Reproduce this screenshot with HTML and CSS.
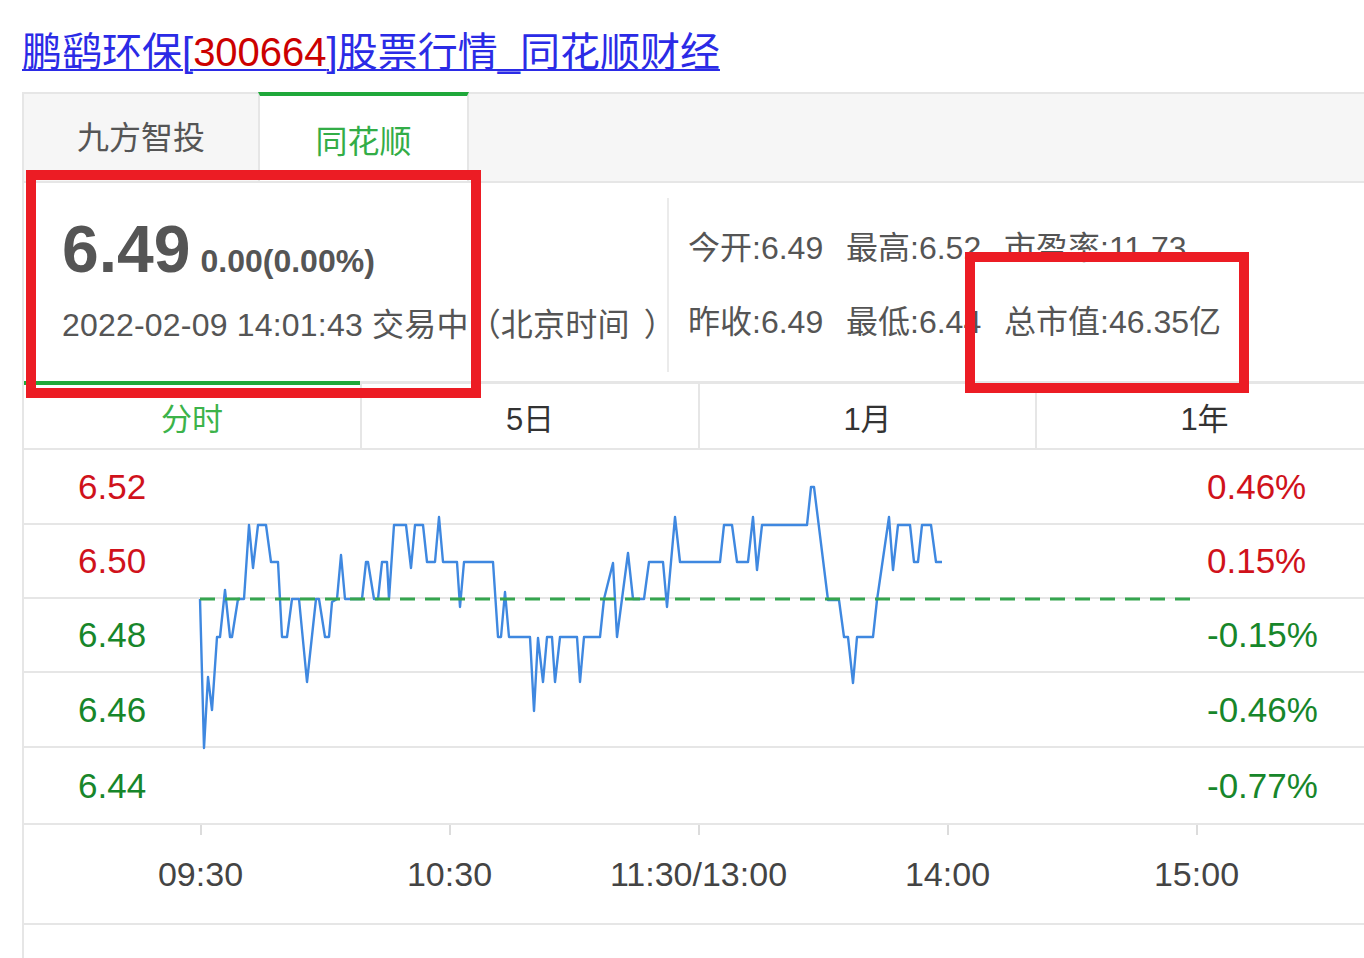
FILE: index.html
```html
<!DOCTYPE html>
<html lang="zh-CN">
<head>
<meta charset="utf-8">
<title>鹏鹞环保[300664]股票行情_同花顺财经</title>
<link rel="stylesheet" href="styles.css">
</head>
<body>
<div class="page">
  <h3 class="title"><a class="link" href="#">鹏鹞环保[<span class="code">300664</span>]股票行情_同花顺财经</a></h3>
  <div class="card">
    <div class="tabs">
      <div class="tab">九方智投</div>
      <div class="tab active">同花顺</div>
    </div>
    <div class="info">
      <div class="quote">
        <div class="price-row"><span class="price">6.49</span><span class="change">0.00(0.00%)</span></div>
        <div class="time">2022-02-09 14:01:43 交易中<span class="paren-l">（</span>北京时间<span class="paren-r">）</span></div>
      </div>
      <div class="stats">
        <span>今开:6.49</span><span>最高:6.52</span><span>市盈率:11.73</span>
        <span>昨收:6.49</span><span>最低:6.44</span><span>总市值:46.35亿</span>
      </div>
    </div>
    <div class="periods">
      <div class="period active">分时</div>
      <div class="period">5日</div>
      <div class="period">1月</div>
      <div class="period">1年</div>
    </div>
    <div class="chart">
      <div class="row r1"><span class="yl up">6.52</span><span class="yr up">0.46%</span></div>
      <div class="row r2"><span class="yl up">6.50</span><span class="yr up">0.15%</span></div>
      <div class="row r3"><span class="yl down">6.48</span><span class="yr down">-0.15%</span></div>
      <div class="row r4"><span class="yl down">6.46</span><span class="yr down">-0.46%</span></div>
      <div class="row r5"><span class="yl down">6.44</span><span class="yr down">-0.77%</span></div>
      <svg class="plot" width="1348" height="375" viewBox="24 450 1348 375">
        <polyline class="price-line" points="200,599 204,748 208,677 212,710 217,637 220,637 225,590 230,637 232,637 238,599 244,599 249,525 253,568 258,525 266,525 271,562 278,562 282,637 287,637 292,599 299,599 307,682 316,599 319,599 325,637 329,637 332,602 337,599 341,555 345,599 362,599 366,562 368,562 374,599 378,599 382,562 387,562 389,599 394,525 406,525 411,568 415,525 423,525 427,562 435,562 439,517 443,562 457,562 460,607 464,562 493,562 498,637 501,637 505,592 509,637 530,637 534,711 538,638 543,682 547,637 552,637 555,682 560,637 577,637 580,682 584,637 600,637 604,599 613,563 617,637 628,553 633,599 644,599 649,562 663,562 667,607 675,517 680,562 720,562 724,525 732,525 737,562 748,562 753,517 757,570 762,525 807,525 811,487 814,487 828,600 839,600 844,637 848,637 853,683 857,637 873,637 877,600 889,517 893,570 898,525 910,525 914,562 918,562 922,525 931,525 936,562 942,562"/>
        <line class="base-line" x1="200" y1="599" x2="1190" y2="599"/>
      </svg>
    </div>
    <div class="axis">
      <div class="tick">09:30</div>
      <div class="tick">10:30</div>
      <div class="tick">11:30/13:00</div>
      <div class="tick">14:00</div>
      <div class="tick">15:00</div>
    </div>
    <div class="tail"></div>
  </div>
  <div class="hl hl-1"></div>
  <div class="hl hl-2"></div>
</div>
</body>
</html>
```
FILE: styles.css
```css
html, body {
  margin: 0;
  padding: 0;
  background: #fff;
}
body {
  width: 1364px;
  height: 958px;
  overflow: hidden;
  font-family: "Liberation Sans", "Noto Sans CJK SC", sans-serif;
}
.page {
  position: relative;
  padding-top: 28px;
}
.title {
  margin: 0 0 16px 22px;
  font-weight: normal;
  font-size: 40px;
  line-height: 48px;
  white-space: nowrap;
}
.link {
  color: #2b2be6;
  text-decoration: underline;
  text-decoration-thickness: 2px;
  text-underline-offset: 3px;
}
.code {
  color: #cc0000;
}
.card {
  margin-left: 22px;
  width: 1350px;
  border-top: 2px solid #e6e6e6;
  border-left: 2px solid #e6e6e6;
}
.tabs {
  display: flex;
  height: 89px;
  box-sizing: border-box;
  background: #f6f6f6;
  border-bottom: 2px solid #e6e6e6;
}
.tab {
  width: 234px;
  box-sizing: border-box;
  padding-bottom: 6px;
  display: flex;
  align-items: center;
  justify-content: center;
  font-size: 32px;
  color: #555;
}
.tab.active {
  width: 211px;
  margin-top: -2px;
  padding-bottom: 0;
  background: #fff;
  border-top: 4px solid #1fa83a;
  border-left: 2px solid #e6e6e6;
  border-right: 2px solid #e6e6e6;
  color: #33ad47;
}
.info {
  display: flex;
  height: 198px;
}
.quote {
  width: 643px;
  box-sizing: border-box;
  padding: 33px 0 0 38px;
  color: #555;
}
.price-row {
  font-size: 66px;
  line-height: 66px;
  font-weight: bold;
  white-space: nowrap;
}
.change {
  font-size: 32px;
  line-height: 32px;
  margin-left: 10px;
}
.time {
  margin-top: 20px;
  font-size: 32px;
  line-height: 40px;
  white-space: nowrap;
  letter-spacing: 0.2px;
}
.paren-l,
.paren-r {
  display: inline-block;
  font-family: "Noto Sans CJK SC", sans-serif;
}
.paren-r {
  margin-left: 14px;
}
.stats {
  margin-top: 15px;
  height: 174px;
  box-sizing: border-box;
  border-left: 2px solid #ebebeb;
  padding: 30px 0 0 19px;
  display: grid;
  grid-template-columns: 158px 158px auto;
  grid-auto-rows: 40px;
  row-gap: 34px;
  font-size: 32px;
  line-height: 40px;
  color: #555;
  white-space: nowrap;
}
.periods {
  display: flex;
}
.period {
  flex: none;
  width: 337px;
  height: 69px;
  box-sizing: border-box;
  padding-top: 1px;
  border-top: 3px solid #e6e6e6;
  border-bottom: 2px solid #e6e6e6;
  border-left: 2px solid #e6e6e6;
  display: flex;
  align-items: center;
  justify-content: center;
  font-size: 31px;
  color: #333;
}
.period.active {
  width: 336px;
  border-left: none;
  border-top: 4px solid #22a83a;
  padding-top: 0;
  color: #3cb34a;
}
.period:nth-child(2) {
  width: 338px;
}
.chart {
  position: relative;
}
.row {
  display: flex;
  align-items: center;
  box-sizing: border-box;
  padding-left: 54px;
  border-bottom: 2px solid #e6e6e6;
  font-size: 35px;
  line-height: 40px;
}
.r1 { height: 75px; }
.r2 { height: 74px; }
.r3 { height: 74px; }
.r4 { height: 75px; }
.r5 { height: 77px; }
.yl {
  width: 1129px;
}
.up {
  color: #d0121b;
}
.down {
  color: #17862a;
}
.plot {
  position: absolute;
  left: 0;
  top: 0;
  overflow: visible;
}
.price-line {
  fill: none;
  stroke: #3f88e0;
  stroke-width: 2.4;
  stroke-linejoin: round;
}
.base-line {
  stroke: #35a54f;
  stroke-width: 3;
  stroke-dasharray: 15 10;
}
.axis {
  display: flex;
  padding-left: 52px;
  height: 100px;
  box-sizing: border-box;
  border-bottom: 2px solid #e6e6e6;
}
.tick {
  flex: none;
  width: 249px;
  display: flex;
  flex-direction: column;
  align-items: center;
  font-size: 34px;
  line-height: 40px;
  color: #444;
  white-space: nowrap;
}
.tick::before {
  content: "";
  width: 2px;
  height: 10px;
  background: #dcdcdc;
  margin-bottom: 19px;
}
.tail {
  height: 40px;
}
.hl {
  position: absolute;
  box-sizing: border-box;
  border: 10px solid #ec1c24;
}
.hl-1 {
  left: 26px;
  top: 170px;
  width: 455px;
  height: 228px;
}
.hl-2 {
  left: 965px;
  top: 252px;
  width: 284px;
  height: 141px;
}
```
